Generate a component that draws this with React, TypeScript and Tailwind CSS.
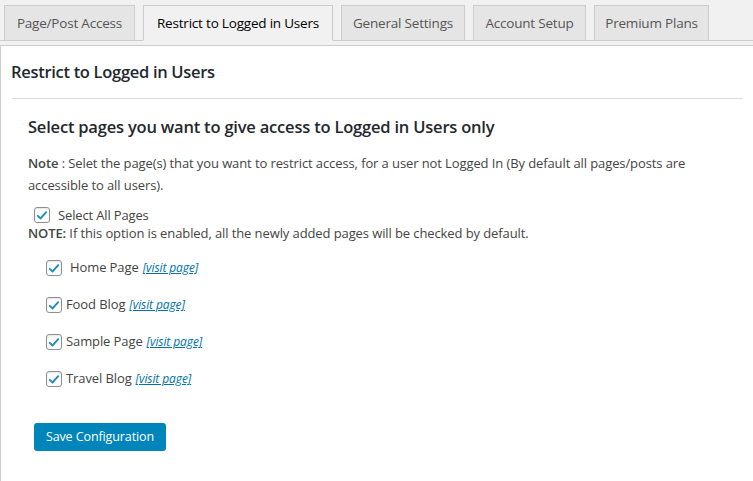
import React from "react";

function Check({ className = "" }: { className?: string }) {
  return (
    <span
      className={`inline-flex h-[16px] w-[16px] shrink-0 items-center justify-center rounded-[3px] border border-[#8c8f94] bg-white shadow-[inset_0_1px_2px_rgba(0,0,0,0.1)] ${className}`}
    >
      <svg viewBox="0 0 16 16" className="h-[15px] w-[15px]">
        <path
          d="M3.2 8.4 L6.4 11.4 L12.8 4.2"
          fill="none"
          stroke="#1e8cbe"
          strokeWidth="2.2"
          strokeLinecap="round"
          strokeLinejoin="round"
        />
      </svg>
    </span>
  );
}

const tabs = [
  { label: "Page/Post Access", w: "w-[131px]", active: false },
  { label: "Restrict to Logged in Users", w: "w-[190px]", active: true },
  { label: "General Settings", w: "w-[124px]", active: false },
  { label: "Account Setup", w: "w-[113px]", active: false },
  { label: "Premium Plans", w: "w-[115px]", active: false },
];

const pages = [
  { name: "Home Page", extra: true },
  { name: "Food Blog", extra: false },
  { name: "Sample Page", extra: false },
  { name: "Travel Blog", extra: false },
];

export default function App() {
  return (
    <div
      className="min-h-[481px] bg-[#f1f1f1] text-[#444]"
      style={{ fontFamily: '"Open Sans", "Noto Sans", Arial, sans-serif' }}
    >
      <nav className="flex h-[41px] gap-[8px] border-b border-[#ccc] pl-[4px] pt-[5px]">
        {tabs.map((t) => (
          <div
            key={t.label}
            className={`${t.w} flex h-[36px] items-center justify-center border text-[13.5px] tracking-[-0.2px] ${
              t.active
                ? "border-[#ccc] border-b-[#f1f1f1] bg-[#f1f1f1] text-black"
                : "border-[#ccc] bg-[#e5e5e5] text-[#555]"
            } font-medium`}
          >
            {t.label}
          </div>
        ))}
      </nav>
      <div className="mt-[4px] min-h-[436px] border-l border-t border-[#ccc] bg-white pl-[10px] pr-[10px]">
        <h2 className="pt-[16px] pb-[16px] text-[16.5px] font-semibold leading-[20px] tracking-[-0.3px] text-[#23282d]">
          Restrict to Logged in Users
        </h2>
        <div className="ml-[1px] border-t border-[#ddd]" />
        <div className="pl-[17px]">
          <h3 className="mt-[17px] text-[16.5px] font-semibold leading-[22px] tracking-[-0.2px] text-[#23282d]">
            Select pages you want to give access to Logged in Users only
          </h3>
          <p className="mt-[14px] w-[690px] text-[13px] leading-[22px] tracking-[-0.1px]">
            <span className="font-semibold">Note</span> : Selet the page(s) that you want to restrict access, for a user not Logged In (By default all pages/posts are accessible to all users).
          </p>
          <div className="mt-[10px] flex items-center gap-[8px] pl-[6px] text-[13px] leading-[18px] tracking-[-0.15px]">
            <Check />
            <span>Select All Pages</span>
          </div>
          <p className="text-[13px] leading-[18px] tracking-[-0.1px]">
            <span className="font-semibold">NOTE:</span> If this option is enabled, all the newly added pages will be checked by default.
          </p>
          <div className="mt-[17px] flex flex-col gap-[19px] pl-[18px]">
            {pages.map((p) => (
              <div key={p.name} className="flex h-[18px] items-center text-[13px] tracking-[-0.1px]">
                <Check />
                <span className={p.extra ? "ml-[8px]" : "ml-[4px]"}>{p.name}</span>
                <a className="ml-[4px] text-[12px] italic text-[#0073aa] underline">[visit page]</a>
              </div>
            ))}
          </div>
          <button className="mt-[35px] ml-[6px] h-[28px] w-[132px] rounded-[3px] bg-[#0085ba] text-[12.5px] tracking-[-0.1px] text-white">
            Save Configuration
          </button>
        </div>
      </div>
    </div>
  );
}
